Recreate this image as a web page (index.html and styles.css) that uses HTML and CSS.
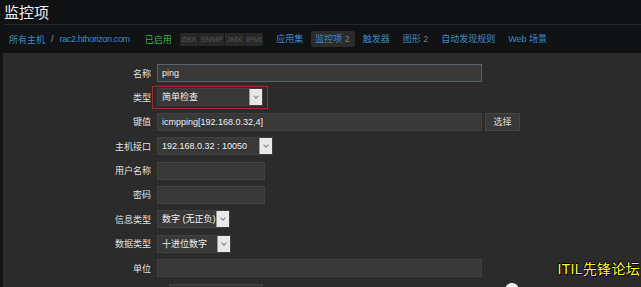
FILE: index.html
```html
<!DOCTYPE html>
<html lang="zh-CN">
<head>
    <meta charset="UTF-8">
    <meta name="viewport" content="width=device-width, initial-scale=1.0">
    <title>监控项</title>
    <link rel="stylesheet" href="styles.css">
</head>
<body>

    <div class="header">
        <h1>监控项</h1>
    </div>

    <div class="nav">
        <div class="crumbs">
            <a class="link">所有主机</a>
            <span class="sep">/</span>
            <a class="link host">rac2.hthorizon.com</a>
        </div>
        <span class="status">已启用</span>
        <div class="badges">
            <span>ZBX</span><span>SNMP</span><span>JMX</span><span>IPMI</span>
        </div>
        <div class="tabs">
            <a class="link tab">应用集</a>
            <a class="link tab active">监控项 <em>2</em></a>
            <a class="link tab">触发器</a>
            <a class="link tab">图形 <em>2</em></a>
            <a class="link tab">自动发现规则</a>
            <a class="link tab">Web 场景</a>
        </div>
    </div>

    <div class="panel">
        <div class="row">
            <label>名称</label>
            <div class="field wide focus">ping</div>
        </div>
        <div class="row">
            <label>类型</label>
            <div class="highlight">
                <div class="select w106">简单检查<span class="arrow"></span></div>
            </div>
        </div>
        <div class="row">
            <label>键值</label>
            <div class="field wide">icmpping[192.168.0.32,4]</div>
            <button class="btn">选择</button>
        </div>
        <div class="row">
            <label>主机接口</label>
            <div class="select w116">192.168.0.32 : 10050<span class="arrow"></span></div>
        </div>
        <div class="row">
            <label>用户名称</label>
            <div class="field w108"></div>
        </div>
        <div class="row">
            <label>密码</label>
            <div class="field w108"></div>
        </div>
        <div class="row">
            <label>信息类型</label>
            <div class="select w72">数字 (无正负)<span class="arrow"></span></div>
        </div>
        <div class="row">
            <label>数据类型</label>
            <div class="select w73">十进位数字<span class="arrow"></span></div>
        </div>
        <div class="row">
            <label>单位</label>
            <div class="field wide"></div>
        </div>
        <div class="row">
            <label></label>
            <div class="field w94 indent"></div>
        </div>

        <div class="watermark">ITIL先锋论坛</div>
        <div class="logo-dot"></div>
    </div>

</body>
</html>
```

FILE: styles.css
```css
body {
    margin: 0;
    padding: 0;
    background: #111214;
    font-family: 'Liberation Sans', 'Noto Sans CJK SC', sans-serif;
    font-size: 9px;
    color: #e6e6e6;
    height: 287px;
    overflow: hidden;
}

.header {
    margin-left: 4px;
    height: 24px;
    border-bottom: 1px solid #26272a;
}

h1 {
    margin: 0;
    font-size: 15px;
    font-weight: normal;
    line-height: 26px;
    color: #f0f0f0;
}

.nav {
    height: 28px;
    display: flex;
    align-items: center;
}

.link {
    color: #3d8ac4;
    text-decoration: none;
}

.crumbs {
    margin-left: 9px;
    display: flex;
    align-items: center;
}

.host {
    letter-spacing: -0.35px;
}

.sep {
    color: #9a9a9a;
    margin: 0 6px 0 6px;
}

.status {
    margin-left: 15px;
    color: #35b048;
}

.badges {
    margin-left: 8px;
    display: flex;
    height: 13px;
    background: #282828;
    border-radius: 2px;
    font-size: 8px;
    line-height: 13px;
    letter-spacing: -0.2px;
    color: #555555;
}

.badges span {
    padding: 0 1.5px;
    border-left: 1px solid #1c1c1c;
}

.badges span:first-child {
    border-left: none;
}

.tabs {
    margin-left: 8px;
    display: flex;
    align-items: center;
    gap: 3px;
}

.tab {
    padding: 0 5px;
    line-height: 16px;
    border-radius: 2px;
}

.tab em {
    font-style: normal;
    color: #7a7a7a;
}

.tab.active {
    background: #2b2b2b;
    padding: 0 5px 0 4px;
}

.panel {
    position: relative;
    margin-left: 3px;
    background: #2b2b2b;
    padding-top: 11px;
    height: 223px;
    overflow: hidden;
    display: flex;
    flex-direction: column;
    gap: 6.4px;
}

.row {
    display: flex;
    align-items: center;
    height: 18px;
    flex-shrink: 0;
}

.row label {
    width: 154px;
    text-align: right;
    padding-right: 6px;
    box-sizing: border-box;
    color: #e0e0e0;
}

.field,
.select {
    height: 18px;
    box-sizing: border-box;
    background: #383838;
    border: 1px solid #414141;
    padding-left: 4px;
    line-height: 16px;
    color: #eeeeee;
}

.wide {
    width: 325px;
}

.focus {
    border-color: #55626a;
}

.w108 { width: 108px; }
.w106 { width: 106px; }
.w116 { width: 116px; }
.w72 { width: 73px; }
.w73 { width: 74px; }
.w94 { width: 94px; }

.indent {
    margin-left: 12px;
}

.select {
    position: relative;
    padding-right: 14px;
    white-space: nowrap;
}

.arrow {
    position: absolute;
    top: 0;
    right: 0;
    width: 13px;
    height: 16px;
    background: #e8e8e8;
    border-left: 1px solid #9a9a9a;
    box-sizing: border-box;
}

.arrow::after {
    content: '';
    position: absolute;
    left: 4px;
    top: 5px;
    width: 3px;
    height: 3px;
    border-right: 1px solid #808080;
    border-bottom: 1px solid #808080;
    transform: rotate(45deg);
}

.highlight {
    position: relative;
}

.highlight::after {
    content: '';
    position: absolute;
    left: -5px;
    right: -5px;
    top: -2px;
    bottom: -3px;
    border: 1px solid #a8272b;
}

.btn {
    margin-left: 3px;
    width: 35px;
    height: 18px;
    background: #383838;
    border: 1px solid #454545;
    color: #dcdcdc;
    font-family: inherit;
    font-size: 9px;
    padding: 0;
}

.watermark {
    position: absolute;
    right: 1px;
    top: 205px;
    font-size: 14px;
    color: #ffff1a;
    text-shadow: 1px 1px 0 #000, -1px 0 0 #000, 0 -1px 0 #000;
    letter-spacing: 0.3px;
}

.logo-dot {
    position: absolute;
    left: 502px;
    top: 230px;
    width: 14px;
    height: 14px;
    border-radius: 50%;
    background: #f2f2f2;
}
```
